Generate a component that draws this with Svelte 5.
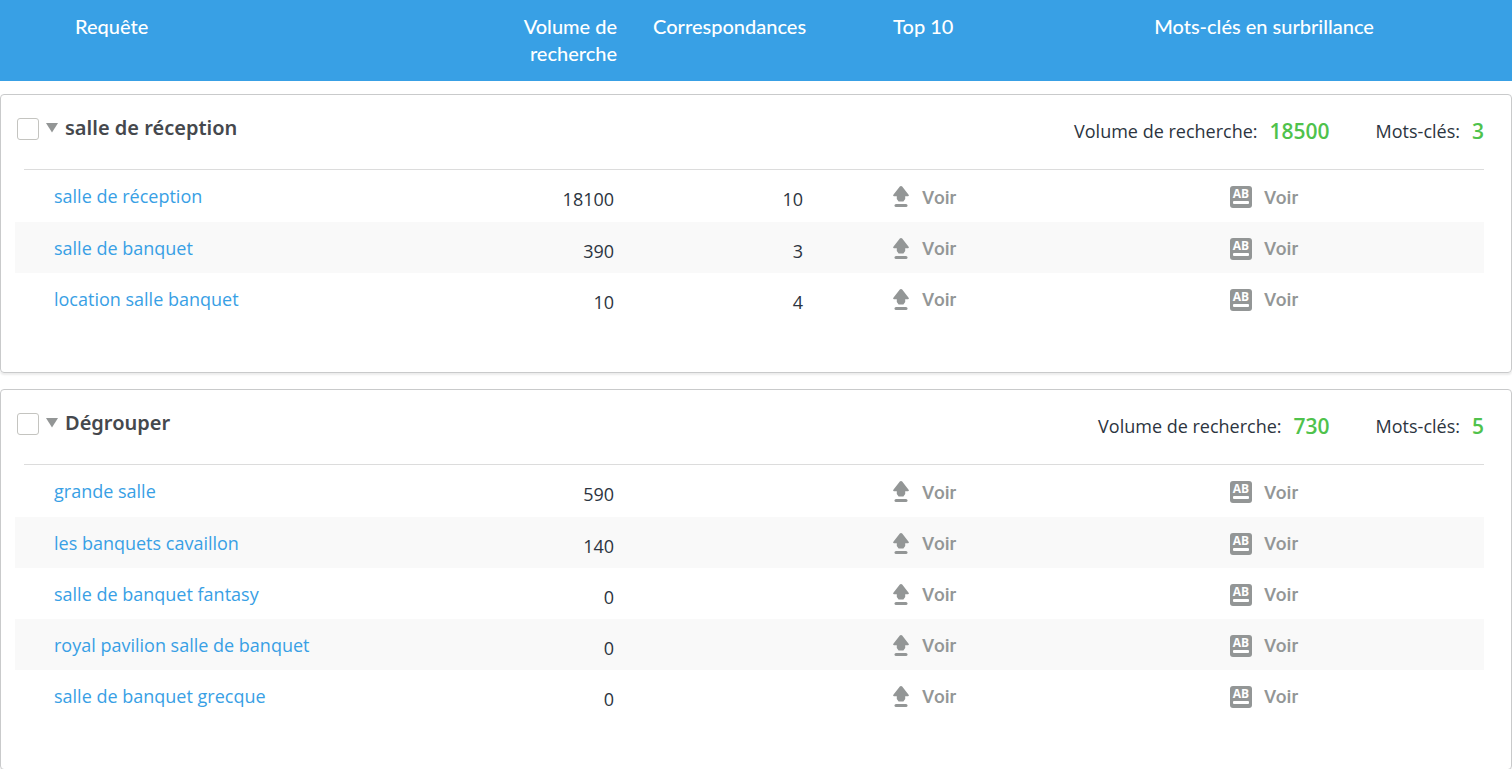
<script lang="ts">
  type Keyword = { query: string; volume: number; matches?: number };
  type Group = { id: string; name: string; volume: number; open: boolean; checked: boolean; keywords: Keyword[] };

  let groups: Group[] = $state([
    {
      id: 'reception',
      name: 'salle de réception',
      volume: 18500,
      open: true,
      checked: false,
      keywords: [
        { query: 'salle de réception', volume: 18100, matches: 10 },
        { query: 'salle de banquet', volume: 390, matches: 3 },
        { query: 'location salle banquet', volume: 10, matches: 4 },
      ],
    },
    {
      id: 'ungrouped',
      name: 'Dégrouper',
      volume: 730,
      open: true,
      checked: false,
      keywords: [
        { query: 'grande salle', volume: 590 },
        { query: 'les banquets cavaillon', volume: 140 },
        { query: 'salle de banquet fantasy', volume: 0 },
        { query: 'royal pavilion salle de banquet', volume: 0 },
        { query: 'salle de banquet grecque', volume: 0 },
      ],
    },
  ]);
</script>

{#snippet columns()}
  <colgroup>
    <col class="col-query" />
    <col class="col-volume" />
    <col class="col-matches" />
    <col class="col-top" />
    <col />
  </colgroup>
{/snippet}

<div class="keywords">
  <header class="head">
    <table>
      {@render columns()}
      <thead>
        <tr>
          <th class="query">Requête</th>
          <th class="num">Volume de recherche</th>
          <th class="num">Correspondances</th>
          <th class="top">Top 10</th>
          <th class="highlight">Mots-clés en surbrillance</th>
        </tr>
      </thead>
    </table>
  </header>

  {#each groups as group (group.id)}
    <section class="group">
      <div class="group-head">
        <input type="checkbox" aria-label={group.name} bind:checked={group.checked} />
        <button
          type="button"
          class="toggle"
          class:closed={!group.open}
          aria-expanded={group.open}
          aria-label="Afficher {group.name}"
          onclick={() => (group.open = !group.open)}
        >
          <svg width="12" height="10" viewBox="0 0 12 10"><path d="M0 0h12L6 9.5z" fill="#939696" /></svg>
        </button>
        <h2>{group.name}</h2>
        <p>Volume de recherche: <strong>{group.volume}</strong></p>
        <p>Mots-clés: <strong>{group.keywords.length}</strong></p>
      </div>

      {#if group.open}
        <div class="rows">
          <table>
            {@render columns()}
            <tbody>
              {#each group.keywords as keyword (keyword.query)}
                <tr>
                  <td class="query"><a href="#{group.id}">{keyword.query}</a></td>
                  <td class="num">{keyword.volume}</td>
                  <td class="num">{keyword.matches ?? ''}</td>
                  <td class="top">
                    <button type="button" class="view">
                      <svg width="17" height="22" viewBox="0 0 17 22" fill="#939696">
                        <path d="M8 0c.5 0 .9.200 1.200.6l6.400 8.100c.6.8.2 1.600-.7 1.600h-2.700v2.600l-1.800 2.500H5.600l-1.800-2.500v-2.600H1.100c-.9 0-1.300-.8-.7-1.600L6.800.6C7.100.2 7.500 0 8 0z" />
                        <rect x="1.500" y="18" width="13" height="3" rx="1.500" />
                      </svg>
                      Voir
                    </button>
                  </td>
                  <td class="highlight">
                    <button type="button" class="view">
                      <span class="ab">AB</span>
                      Voir
                    </button>
                  </td>
                </tr>
              {/each}
            </tbody>
          </table>
        </div>
      {/if}
    </section>
  {/each}
</div>

<style>
  :global(body) {
    margin: 0;
    background: #fff;
  }

  .keywords {
    font-family: 'Open Sans', 'Noto Sans', sans-serif;
    font-size: 18px;
    color: #2c3440;
  }

  table {
    width: 100%;
    table-layout: fixed;
    border-collapse: collapse;
  }

  .col-query {
    width: 32%;
  }

  .col-volume {
    width: 132px;
  }

  .col-matches {
    width: 189px;
  }

  .col-top {
    width: 238px;
  }

  th,
  td {
    padding: 0;
    font-weight: 400;
    text-align: left;
  }

  .num {
    text-align: right;
  }

  .highlight {
    text-align: center;
  }

  .top {
    padding-left: 87px;
  }

  .head {
    margin-bottom: 13px;
    padding: 13px 28px 14px 15px;
    background: #38a0e5;
    color: #fff;
  }

  .head th {
    font-family: Lato, 'Noto Sans', sans-serif;
    font-size: 20px;
    font-weight: 500;
    line-height: 27px;
    vertical-align: top;
  }

  .head .query {
    padding-left: 60px;
  }

  .group {
    margin-bottom: 16px;
    padding: 0 27px 48px 14px;
    border: 1px solid #c9cacb;
    border-radius: 4px;
    box-shadow: 0 2px 2px rgba(0, 0, 0, 0.08);
  }

  .group:last-child {
    margin-bottom: 0;
  }

  .group-head {
    display: flex;
    align-items: center;
    height: 66px;
    padding-left: 2px;
  }

  .group-head input {
    appearance: none;
    width: 22px;
    height: 22px;
    margin: 2px 0 0;
    border: 1px solid #c4c4c0;
    border-radius: 3px;
    background: #fff;
  }

  .group-head input:checked {
    background: #38a0e5;
  }

  .toggle {
    display: flex;
    margin: 0 7px;
    padding: 0;
    border: none;
    background: none;
    cursor: pointer;
  }

  .toggle.closed svg {
    transform: rotate(-90deg);
  }

  h2 {
    flex: 1;
    margin: 0 0 2px;
    font-family: 'Noto Sans', sans-serif;
    font-size: 20px;
    font-weight: 600;
    color: #45484d;
  }

  .group-head p {
    display: flex;
    align-items: center;
    margin: 5px 0 0 46px;
  }

  .group-head strong {
    margin-left: 12px;
    font-size: 21px;
    font-weight: 600;
    color: #4fc24c;
  }

  .rows::before {
    content: '';
    display: block;
    height: 1px;
    margin: 8px 0 0 9px;
    background: #dcdcdc;
  }

  .rows td {
    box-sizing: border-box;
    height: 51px;
  }

  .rows tr:first-child td {
    height: 52px;
  }

  .rows tr:nth-child(even) {
    background: #f9f9f9;
  }

  .rows .query {
    padding-left: 39px;
  }

  .rows .num {
    padding: 6px 3px 0 0;
  }

  a {
    color: #38a0e5;
    text-decoration: none;
  }

  .view {
    display: inline-flex;
    align-items: center;
    gap: 12px;
    padding: 0;
    border: none;
    background: none;
    font-family: Roboto, sans-serif;
    font-size: 19px;
    font-weight: 500;
    color: #939696;
    vertical-align: middle;
    cursor: pointer;
  }

  .ab {
    display: flex;
    flex-direction: column;
    align-items: center;
    width: 22px;
    height: 22px;
    border-radius: 3px;
    background: #939696;
    color: #fff;
    font-family: 'Open Sans', sans-serif;
    font-size: 12px;
    font-weight: 700;
    line-height: 15px;
  }

  .ab::after {
    content: '';
    width: 16px;
    height: 3px;
    border-radius: 1px;
    background: #fff;
  }
</style>
